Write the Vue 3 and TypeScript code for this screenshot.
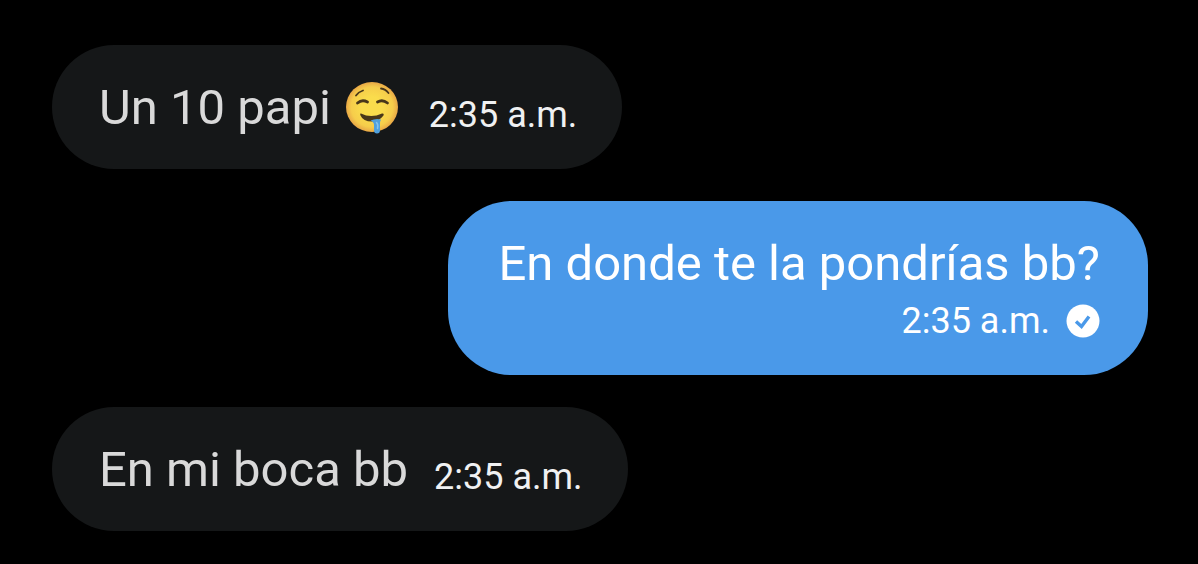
<script setup lang="ts">
interface Message {
  id: number
  text: string
  emoji?: boolean
  time: string
  outgoing: boolean
}

const messages: Message[] = [
  { id: 1, text: 'Un 10 papi', emoji: true, time: '2:35 a.m.', outgoing: false },
  { id: 2, text: 'En donde te la pondrías bb?', time: '2:35 a.m.', outgoing: true },
  { id: 3, text: 'En mi boca bb', time: '2:35 a.m.', outgoing: false },
]
</script>

<template>
  <main class="chat">
    <article
      v-for="message in messages"
      :key="message.id"
      class="bubble"
      :class="message.outgoing ? 'outgoing' : 'incoming'"
    >
      <p class="text">
        <span>{{ message.text }}</span>
        <svg v-if="message.emoji" class="emoji" viewBox="0 0 54 54" role="img" aria-label="🤤">
          <defs>
            <radialGradient id="face" cx="0.5" cy="0.5" r="0.5">
              <stop offset="0.4" stop-color="#fadc4c" />
              <stop offset="0.8" stop-color="#f6cd4b" />
              <stop offset="1" stop-color="#e8a746" />
            </radialGradient>
          </defs>
          <ellipse cx="27" cy="26" rx="26" ry="25" fill="url(#face)" />
          <g fill="none" stroke="#49371a" stroke-linecap="round">
            <path d="M11 14.500Q13.500 11 18 9.500" stroke-width="1.800" />
            <path d="M36 7.500Q40.500 8 43.500 12" stroke-width="1.800" />
            <path d="M12.500 22Q17 18 22.500 21" stroke-width="2.800" />
            <path d="M32.500 21Q37.500 18 42.500 22" stroke-width="2.800" />
          </g>
          <path d="M16 32.500Q26 37.500 37 32.500Q39.500 32 38.500 34.500Q34 40.500 27 40.500Q18 40.500 15.500 34.500Q14.500 32 16 32.500Z" fill="#49371a" />
          <path d="M25.500 39.500Q31 37 36 38.500Q34.500 41 35 44V49Q35 52.500 32 52.500Q29 52.500 29 49V44Q29 41 25.500 39.500Z" fill="#50a0dc" />
          <path d="M31.500 41.500Q33.500 43.500 32.500 47.500" fill="none" stroke="#82c3ee" stroke-width="1.500" stroke-linecap="round" />
        </svg>
      </p>
      <footer class="meta">
        <time datetime="02:35">{{ message.time }}</time>
        <svg v-if="message.outgoing" class="check" viewBox="0 0 34 34" role="img" aria-label="Enviado">
          <circle cx="17" cy="17" r="16.500" fill="#fff" />
          <path d="M10 17.500L15.500 22.500L23 12.500" fill="none" stroke="#4a99e9" stroke-width="3.400" />
        </svg>
      </footer>
    </article>
  </main>
</template>

<style scoped>
.chat {
  display: flex;
  flex-direction: column;
  align-items: flex-start;
  gap: 32px;
  padding: 45px 50px 32px 52px;
  font-family: Roboto, "Liberation Sans", sans-serif;
}

.bubble {
  display: flex;
  box-sizing: border-box;
  max-width: 100%;
  border-radius: 64px;
}

.incoming {
  align-items: center;
  gap: 26px;
  padding: 33px 45px 31px 47px;
  background: #151718;
  color: #d9d9d9;
}

.outgoing {
  flex-direction: column;
  align-items: flex-end;
  align-self: flex-end;
  padding: 33px 48px 27px 50px;
  background: #4a99e9;
  color: #fff;
}

.text {
  display: flex;
  align-items: center;
  gap: 14px;
  margin: 0;
  font-size: 49px;
  line-height: 60px;
}

.emoji {
  flex: none;
  width: 54px;
  height: 54px;
  margin-right: 4px;
}

.meta {
  display: flex;
  align-items: center;
  gap: 16px;
  font-size: 36px;
  line-height: 54px;
}

.incoming .meta {
  padding-top: 14px;
  line-height: 44px;
  color: #f0f1f2;
}

.check {
  width: 34px;
  height: 34px;
}
</style>

<style>
body {
  margin: 0;
  background: #000;
}
</style>
